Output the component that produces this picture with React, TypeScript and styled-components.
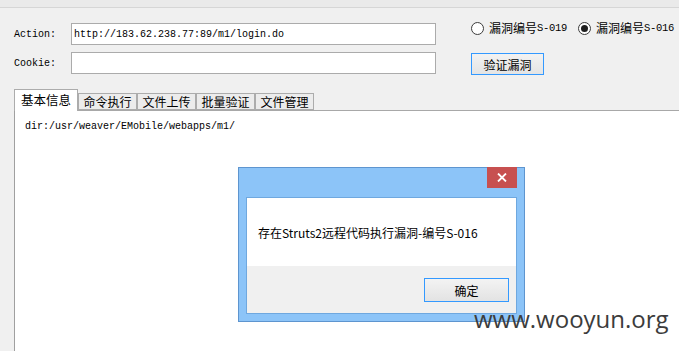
import styled, { createGlobalStyle } from "styled-components";

const GlobalStyle = createGlobalStyle`
  html, body {
    margin: 0;
    padding: 0;
    background: #f0f0f0;
  }
  * {
    box-sizing: border-box;
  }
`;

const mono = `"Liberation Mono", "Noto Sans CJK SC", monospace`;
const cjk = `"Noto Sans CJK SC", "Noto Sans", sans-serif`;

const Window = styled.div`
  position: relative;
  width: 679px;
  height: 351px;
  overflow: hidden;
  background: #f0f0f0;
  display: flex;
  flex-direction: column;
`;

const TitleStrip = styled.div`
  height: 8px;
  background: #eaeaea;
  border-bottom: 1px solid #d6d6d6;
  flex: none;
`;

const TopArea = styled.div`
  height: 81px;
  display: flex;
  padding-left: 14px;
  flex: none;
`;

const FormColumn = styled.div`
  width: 422px;
  padding-top: 15px;
  display: flex;
  flex-direction: column;
  gap: 7px;
`;

const FieldRow = styled.div`
  display: flex;
  align-items: center;
  height: 22px;
`;

const Label = styled.span`
  width: 57px;
  font-family: ${mono};
  font-size: 10px;
  color: #000;
`;

const TextInput = styled.div`
  width: 365px;
  height: 22px;
  background: #fff;
  border: 1px solid #ababab;
  padding-left: 2px;
  display: flex;
  align-items: center;
  font-family: ${mono};
  font-size: 10px;
  color: #000;
`;

const OptionsColumn = styled.div`
  margin-left: 35px;
  padding-top: 13px;
  display: flex;
  flex-direction: column;
  align-items: flex-start;
`;

const RadioRow = styled.div`
  display: flex;
  align-items: center;
  height: 14px;
  gap: 11px;
`;

const RadioItem = styled.div`
  display: flex;
  align-items: center;
  gap: 5px;
`;

const RadioCircle = styled.span<{ $checked?: boolean }>`
  width: 13px;
  height: 13px;
  border-radius: 50%;
  border: 1px solid #3c3c3c;
  background: #fff;
  display: flex;
  align-items: center;
  justify-content: center;
  &::after {
    content: "";
    display: ${(p) => (p.$checked ? "block" : "none")};
    width: 7px;
    height: 7px;
    border-radius: 50%;
    background: #1e1e1e;
  }
`;

const RadioText = styled.span`
  display: flex;
  align-items: center;
  font-family: ${cjk};
  font-size: 12px;
  color: #000;
  line-height: 14px;
`;

const Latin = styled.span`
  font-family: ${mono};
  font-size: 10.5px;
  line-height: 14px;
  letter-spacing: -0.3px;
  padding-bottom: 1px;
`;

const CheckButton = styled.div`
  margin-top: 18px;
  width: 73px;
  height: 22px;
  border: 1px solid #3399ff;
  background: linear-gradient(#f2f2f2, #e4e4e4);
  display: flex;
  align-items: center;
  justify-content: center;
  font-family: ${cjk};
  font-size: 12px;
  color: #000;
`;

const TabBar = styled.div`
  display: flex;
  align-items: flex-end;
  height: 21px;
  margin-left: 14px;
  flex: none;
  position: relative;
  z-index: 1;
`;

const Tab = styled.div<{ $active?: boolean }>`
  width: ${(p) => (p.$active ? 64 : 59)}px;
  height: ${(p) => (p.$active ? 22 : 17)}px;
  margin-bottom: ${(p) => (p.$active ? -1 : 0)}px;
  background: ${(p) => (p.$active ? "#fff" : "#ececec")};
  border: 1px solid #acacac;
  border-bottom: ${(p) => (p.$active ? "none" : "1px solid #acacac")};
  display: flex;
  align-items: center;
  justify-content: center;
  font-family: ${cjk};
  font-size: ${(p) => (p.$active ? 12.5 : 12)}px;
  padding-bottom: ${(p) => (p.$active ? 2 : 0)}px;
  color: #000;
`;

const Panel = styled.div`
  flex: 1;
  margin-left: 14px;
  background: #fff;
  border-top: 1px solid #a8a8a8;
  border-left: 1px solid #a0a0a0;
  padding: 10px 0 0 10px;
  font-family: ${mono};
  font-size: 10px;
  color: #000;
`;

const Dialog = styled.div`
  position: absolute;
  left: 238px;
  top: 167px;
  width: 287px;
  height: 155px;
  background: #8cc4f8;
  border: 1px solid #5e95cf;
  display: flex;
  flex-direction: column;
  padding: 29px 7px 7px 7px;
`;

const CloseButton = styled.div`
  position: absolute;
  right: 7px;
  top: -1px;
  width: 30px;
  height: 21px;
  background: #c75050;
  display: flex;
  align-items: center;
  justify-content: center;
`;

const DialogBody = styled.div`
  flex: 1;
  border: 1px solid #6fa8df;
  display: flex;
  flex-direction: column;
`;

const MessageArea = styled.div`
  height: 68px;
  background: #fff;
  padding-left: 11px;
  display: flex;
  align-items: center;
  font-family: ${cjk};
  font-size: 12px;
  color: #000;
`;

const ButtonArea = styled.div`
  flex: 1;
  background: #f0f0f0;
  display: flex;
  justify-content: flex-end;
  padding: 12px 7px 0 0;
`;

const OkButton = styled.div`
  width: 85px;
  height: 24px;
  border: 1px solid #3399ff;
  background: linear-gradient(#f3f3f3, #e3e3e3);
  display: flex;
  align-items: center;
  justify-content: center;
  font-family: ${cjk};
  font-size: 12px;
  color: #000;
`;

const Watermark = styled.div`
  position: absolute;
  left: 474px;
  top: 307px;
  font-family: "Open Sans", sans-serif;
  font-size: 24px;
  line-height: 1;
  color: #3c3c3c;
`;

const tabs = ["基本信息", "命令执行", "文件上传", "批量验证", "文件管理"];

export default function App() {
  return (
    <>
      <GlobalStyle />
      <Window>
        <TitleStrip />
        <TopArea>
          <FormColumn>
            <FieldRow>
              <Label>Action:</Label>
              <TextInput>http://183.62.238.77:89/m1/login.do</TextInput>
            </FieldRow>
            <FieldRow>
              <Label>Cookie:</Label>
              <TextInput />
            </FieldRow>
          </FormColumn>
          <OptionsColumn>
            <RadioRow>
              <RadioItem>
                <RadioCircle />
                <RadioText>
                  漏洞编号<Latin>S-019</Latin>
                </RadioText>
              </RadioItem>
              <RadioItem>
                <RadioCircle $checked />
                <RadioText>
                  漏洞编号<Latin>S-016</Latin>
                </RadioText>
              </RadioItem>
            </RadioRow>
            <CheckButton>验证漏洞</CheckButton>
          </OptionsColumn>
        </TopArea>
        <TabBar>
          {tabs.map((t, i) => (
            <Tab key={t} $active={i === 0}>
              {t}
            </Tab>
          ))}
        </TabBar>
        <Panel>dir:/usr/weaver/EMobile/webapps/m1/</Panel>

        <Dialog>
          <CloseButton>
            <svg width="10" height="9" viewBox="0 0 10 9">
              <path d="M1 0.5 L9 8.5 M9 0.5 L1 8.5" stroke="#fff" strokeWidth="1.8" />
            </svg>
          </CloseButton>
          <DialogBody>
            <MessageArea>存在Struts2远程代码执行漏洞-编号S-016</MessageArea>
            <ButtonArea>
              <OkButton>确定</OkButton>
            </ButtonArea>
          </DialogBody>
        </Dialog>
        <Watermark>www.wooyun.org</Watermark>
      </Window>
    </>
  );
}
